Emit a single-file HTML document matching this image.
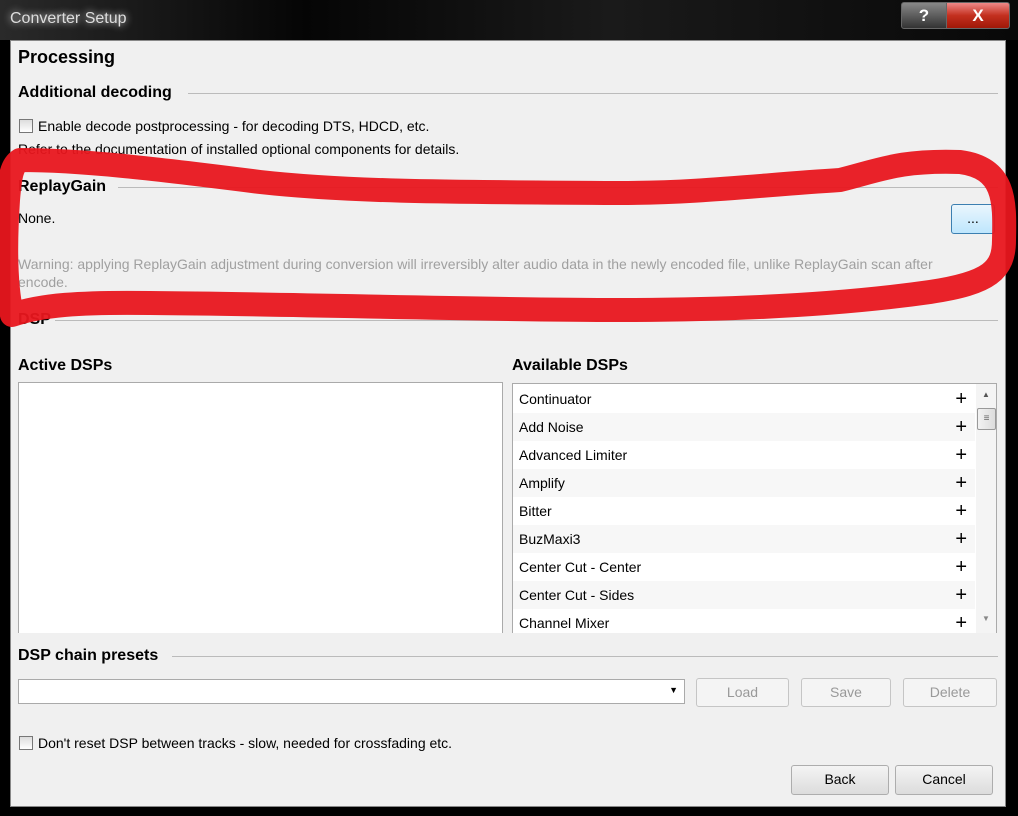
<!DOCTYPE html>
<html><head><style>
*{box-sizing:border-box;margin:0;padding:0}
body{width:1018px;height:816px;background:#000;position:relative;overflow:hidden;font-family:"Liberation Sans",sans-serif;font-size:14px;color:#000}
.a{position:absolute}
.panel{left:10px;top:40px;width:996px;height:767px;background:#f0f0f0;border:1px solid #888}
.h{font-weight:bold;font-size:16px}
.line{height:1px;background:#bbb}
.cb{width:14px;height:14px;border:1px solid #777;background:linear-gradient(#ddd,#fff)}
.btn{border:1px solid #adadad;border-radius:3px;background:linear-gradient(#f4f4f4,#dcdcdc);text-align:center;font-size:14px;line-height:26px}
.dis{color:#999;background:#f4f4f4;border-color:#c5c5c5}
.row{position:absolute;left:0;width:462px;height:28px;line-height:28px;padding-left:6px}
.row span{position:absolute;right:8px;font-size:20px;line-height:28px}
</style></head><body>
<div class="a" style="left:0;top:0;width:1018px;height:40px;background:linear-gradient(90deg,#2a2a2a,#050505 30%,#1a1a1a 60%,#080808)"></div>
<div class="a" style="left:10px;top:10px;color:#ddd;font-size:16px;text-shadow:0 0 8px #fff">Converter Setup</div>
<div class="a" style="left:901px;top:2px;width:46px;height:27px;border:1px solid #666;border-radius:3px 0 0 3px;background:linear-gradient(#888,#333);color:#fff;text-align:center;font-weight:bold;font-size:17px;line-height:25px">?</div>
<div class="a" style="left:946px;top:2px;width:64px;height:27px;border:1px solid #666;border-radius:0 3px 3px 0;background:linear-gradient(#e88,#c3301f 50%,#a01808);color:#fff;text-align:center;font-weight:bold;font-size:17px;line-height:25px">X</div>
<div class="a panel"></div>
<div class="a" style="left:18px;top:47px;font-weight:bold;font-size:18px">Processing</div>
<div class="a h" style="left:18px;top:84px">Additional decoding</div><div class="a line" style="left:188px;top:93px;width:810px"></div>
<div class="a cb" style="left:19px;top:119px"></div>
<div class="a" style="left:38px;top:118px">Enable decode postprocessing - for decoding DTS, HDCD, etc.</div>
<div class="a" style="left:18px;top:141px">Refer to the documentation of installed optional components for details.</div>
<div class="a h" style="left:18px;top:178px">ReplayGain</div><div class="a line" style="left:118px;top:187px;width:880px"></div>
<div class="a" style="left:18px;top:210px">None.</div>
<div class="a btn" style="left:951px;top:204px;width:44px;height:30px;border-color:#3c7fb1;background:linear-gradient(#eaf6fd,#bee6fd)">...</div>
<div class="a" style="left:18px;top:255px;width:960px;color:#a0a0a0;line-height:18px">Warning: applying ReplayGain adjustment during conversion will irreversibly alter audio data in the newly encoded file, unlike ReplayGain scan after encode.</div>
<div class="a h" style="left:18px;top:311px">DSP</div><div class="a line" style="left:55px;top:320px;width:943px"></div>
<div class="a h" style="left:18px;top:357px">Active DSPs</div>
<div class="a h" style="left:512px;top:357px">Available DSPs</div>
<div class="a" style="left:18px;top:382px;width:485px;height:251px;background:#fff;border:1px solid #aaa;border-bottom:none"></div>
<div class="a" style="left:512px;top:383px;width:485px;height:250px;background:#fff;border:1px solid #aaa;border-bottom:none;overflow:hidden">
<div class="row" style="top:1px;background:#fff">Continuator<span>+</span></div>
<div class="row" style="top:29px;background:#f7f7f7">Add Noise<span>+</span></div>
<div class="row" style="top:57px;background:#fff">Advanced Limiter<span>+</span></div>
<div class="row" style="top:85px;background:#f7f7f7">Amplify<span>+</span></div>
<div class="row" style="top:113px;background:#fff">Bitter<span>+</span></div>
<div class="row" style="top:141px;background:#f7f7f7">BuzMaxi3<span>+</span></div>
<div class="row" style="top:169px;background:#fff">Center Cut - Center<span>+</span></div>
<div class="row" style="top:197px;background:#f7f7f7">Center Cut - Sides<span>+</span></div>
<div class="row" style="top:225px;background:#fff">Channel Mixer<span>+</span></div>
<div class="a" style="left:463px;top:0;width:21px;height:250px;background:#f4f4f4">
<div class="a" style="left:6px;top:6px;font-size:8px;color:#555">▲</div>
<div class="a" style="left:1px;top:24px;width:19px;height:22px;border:1px solid #999;border-radius:2px;background:linear-gradient(90deg,#f2f2f2,#dcdcdc);font-size:10px;text-align:center;line-height:20px;color:#666">≡</div>
<div class="a" style="left:6px;top:230px;font-size:8px;color:#888">▼</div>
</div></div>
<div class="a h" style="left:18px;top:647px">DSP chain presets</div><div class="a line" style="left:172px;top:656px;width:826px"></div>
<div class="a" style="left:18px;top:679px;width:667px;height:25px;background:#fff;border:1px solid #aaa"><div class="a" style="right:6px;top:5px;font-size:9px">▼</div></div>
<div class="a btn dis" style="left:696px;top:678px;width:93px;height:29px">Load</div>
<div class="a btn dis" style="left:801px;top:678px;width:90px;height:29px">Save</div>
<div class="a btn dis" style="left:903px;top:678px;width:94px;height:29px">Delete</div>
<div class="a cb" style="left:19px;top:736px"></div>
<div class="a" style="left:38px;top:735px">Don't reset DSP between tracks - slow, needed for crossfading etc.</div>
<div class="a btn" style="left:791px;top:765px;width:98px;height:30px">Back</div>
<div class="a btn" style="left:895px;top:765px;width:98px;height:30px">Cancel</div>
<svg class="a" style="left:0;top:0" width="1018" height="816"><path d="M20,160 C80,160 150,168 260,182 C350,192 450,192 620,193 C700,193 760,185 840,180 C880,170 900,160 960,162 C1005,168 1005,200 1004,240 C1004,270 990,283 930,292 C860,302 760,310 620,310 C480,310 300,304 150,303 C80,302 40,305 12,315 C4,280 6,230 8,200 C10,175 12,165 20,160 Z" fill="none" stroke="#e8161e" stroke-width="24" stroke-linejoin="round" opacity="0.95"/></svg>
</body></html>
